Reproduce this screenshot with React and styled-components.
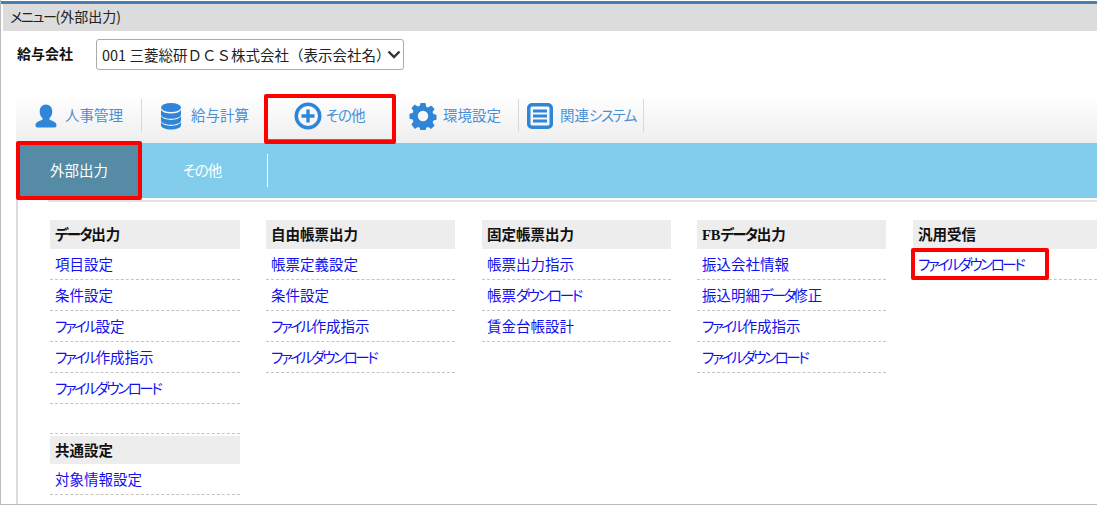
import React from "react";
import styled, { createGlobalStyle } from "styled-components";

const GlobalStyle = createGlobalStyle`
  html, body {
    margin: 0;
    padding: 0;
    background: #fff;
  }
  body {
    font-family: "Noto Sans CJK JP", "Liberation Sans", sans-serif;
    font-size: 14px;
  }
`;

const Page = styled.div`
  position: relative;
  width: 1097px;
  height: 505px;
  box-sizing: border-box;
  overflow: hidden;
  border-left: 1px solid #bcbcbc;
  border-bottom: 1px solid #bcbcbc;
  padding-top: 1px;
`;

const TopRule = styled.div`
  height: 3px;
  background: #4a7eb0;
`;

const TitleBar = styled.div`
  height: 27px;
  margin-left: 2px;
  padding-left: 7px;
  background: #dcdcdc;
  color: #222;
  font-size: 14px;
  line-height: 25px;
  font-feature-settings: "palt";
`;

const CompanyRow = styled.div`
  display: flex;
  align-items: flex-start;
  height: 64px;
  padding: 8px 0 0 16px;
  box-sizing: border-box;
`;

const CompanyLabel = styled.label`
  width: 79px;
  font-size: 14px;
  font-weight: 700;
  line-height: 29px;
  color: #111;
`;

const chevron =
  "data:image/svg+xml,%3Csvg xmlns='http://www.w3.org/2000/svg' width='14' height='9' viewBox='0 0 14 9'%3E%3Cpath d='M1.500 1.500 7 7l5.500-5.500' fill='none' stroke='%23333' stroke-width='2.400'/%3E%3C/svg%3E";

const CompanySelect = styled.select`
  width: 308px;
  height: 31px;
  padding: 0 0 0 5px;
  border: 1px solid #aaa;
  border-radius: 3px;
  appearance: none;
  background: #fff url("${chevron}") no-repeat right 2px center;
  color: #222;
  font-family: inherit;
  font-size: 14.5px;
`;

const Body = styled.div`
  margin-left: 15px;
  height: 409px;
  border-left: 2px solid #dcdcdc;
`;

const Nav = styled.nav`
  display: flex;
  align-items: flex-start;
  height: 48px;
  padding: 4px 0 0 2px;
  box-sizing: border-box;
  margin-left: -2px;
  background: linear-gradient(#fff, #eee);
`;

const NavItem = styled.a`
  display: flex;
  align-items: center;
  gap: ${(p) => p.$gap}px;
  height: ${(p) => (p.$current ? 41 : 33)}px;
  box-sizing: border-box;
  width: ${(p) => p.$width}px;
  padding-left: ${(p) => p.$pad}px;
  padding-bottom: ${(p) => (p.$current ? 7 : 0)}px;
  border-right: ${(p) => (p.$rule ? "1px solid #d8d8d8" : "none")};
  border-bottom: ${(p) => (p.$current ? "1px solid #2f86d8" : "none")};
  color: #4a90d9;
  font-size: 14.5px;
  font-feature-settings: "palt";
  white-space: nowrap;
`;

const NavLabel = styled.span`
  padding-bottom: 3px;
`;

const NavIcon = styled.svg`
  width: 28px;
  height: 28px;
  flex: none;
  fill: #2f86d8;
`;

const SubNav = styled.div`
  display: flex;
  align-items: center;
  height: 55px;
  margin-left: -2px;
  background: #82cdec;
`;

const SubTab = styled.a`
  display: flex;
  align-items: center;
  justify-content: center;
  align-self: ${(p) => (p.$active ? "stretch" : "center")};
  width: ${(p) => p.$width}px;
  margin-left: ${(p) => p.$offset || 0}px;
  height: ${(p) => (p.$active ? "auto" : "33px")};
  box-sizing: border-box;
  padding-bottom: 3px;
  background: ${(p) => (p.$active ? "#558ba5" : "transparent")};
  border-right: ${(p) => (p.$rule ? "1px solid #fff" : "none")};
  color: #fff;
  font-size: 14.5px;
  font-feature-settings: "palt";
`;

const Columns = styled.div`
  display: flex;
  margin: 2px 0 0 30px;
  padding: 18px 0 0 2px;
  border-top: 2px solid #e2e2e2;
`;

const Column = styled.div`
  width: ${(p) => p.$width}px;
  margin-right: ${(p) => p.$gap}px;
  flex: none;
`;

const GroupBreak = styled.div`
  height: 2px;
  margin-top: 29px;
  border-top: 1px dashed #c4c4c4;
`;

const Heading = styled.h3`
  margin: 0;
  height: ${(p) => (p.$compact ? 28 : 29)}px;
  padding-left: 5px;
  background: #ededed;
  color: #111;
  font-size: 14.5px;
  font-weight: 700;
  line-height: 28px;
  font-feature-settings: "palt";
`;

const SerifLatin = styled.span`
  font-family: "Liberation Serif", serif;
`;

const LinkRow = styled.a`
  display: block;
  height: 30px;
  padding-left: 5px;
  border-bottom: 1px dashed #c4c4c4;
  color: #1010f0;
  font-size: 14.5px;
  line-height: 29px;
  font-feature-settings: "palt";
  white-space: nowrap;
`;

const Kana = styled.span`
  letter-spacing: ${(p) => p.$track}px;
`;

const Callout = styled.div`
  position: absolute;
  left: ${(p) => p.$x}px;
  top: ${(p) => p.$y}px;
  width: ${(p) => p.$w}px;
  height: ${(p) => p.$h}px;
  box-sizing: border-box;
  border: 4px solid #f00;
  border-radius: 2px;
`;

// the reference font sets kana tighter than kanji
const Tight = ({ text, track }) =>
  text.split(/([ぁ-ヿ]+)/).map((part, i) =>
    i % 2 ? (
      <Kana key={i} $track={track}>
        {part}
      </Kana>
    ) : (
      part
    )
  );

const UserIcon = () => (
  <NavIcon viewBox="0 0 28 28">
    <path d="M14 2.500c-3.900 0-6.300 3-6.300 7 0 2.700 1 5 2.700 6.400.4 1 .2 1.700-.7 2.200C6.500 19.500 3.500 20.500 3.500 23.200c0 1.500 1 2.300 2.500 2.300h16c1.500 0 2.500-.8 2.500-2.300 0-2.700-3-3.700-6.200-5.100-.9-.5-1.100-1.200-.7-2.200 1.700-1.400 2.700-3.700 2.700-6.400 0-4-2.400-7-6.300-7z" />
  </NavIcon>
);

const DatabaseIcon = () => (
  <NavIcon viewBox="0 0 28 28">
    <ellipse cx="14" cy="5.500" rx="10" ry="4.500" />
    <path d="M4 8v4.500c0 2.400 4.500 4.300 10 4.300s10-1.900 10-4.300V8c-1.600 2.300-5.500 3.600-10 3.600S5.600 10.300 4 8z" />
    <path d="M4 14.300v4.200c0 2.400 4.500 4.300 10 4.300s10-1.900 10-4.300v-4.200c-1.600 2.300-5.500 3.600-10 3.600S5.600 16.600 4 14.300z" />
    <path d="M4 20.300v2.900c0 2.400 4.500 4.300 10 4.300s10-1.900 10-4.300v-2.900c-1.600 2.300-5.500 3.600-10 3.600S5.600 22.600 4 20.300z" />
  </NavIcon>
);

const PlusIcon = () => (
  <NavIcon viewBox="0 0 28 28">
    <path
      fillRule="evenodd"
      d="M14 .5a13.500 13.500 0 1 0 0 27 13.500 13.500 0 0 0 0-27zm0 3.500a10 10 0 1 1 0 20 10 10 0 0 1 0-20z"
    />
    <path d="M12.300 7.500h3.400v4.800h4.800v3.400h-4.800v4.800h-3.400v-4.800H7.500v-3.400h4.800z" />
  </NavIcon>
);

const GearIcon = () => (
  <NavIcon viewBox="0 0 28 28">
    <path
      fillRule="evenodd"
      d="M11.500 1h5l.7 3.700 2 .8 3-2.100 3.400 3.500-2 3 .8 2.100 3.100.7v5l-3.100.7-.8 2.100 2 3-3.400 3.500-3-2.100-2 .8-.7 3.700h-5l-.7-3.700-2-.8-3 2.100L2.400 22.500l2-3-.8-2.100-3.100-.7v-5l3.100-.7.8-2.100-2-3L5.800 2.400l3 2.100 2-.8zM14 8.800a5.200 5.200 0 1 0 0 10.400 5.200 5.200 0 0 0 0-10.400z"
    />
  </NavIcon>
);

const ListIcon = () => (
  <NavIcon viewBox="0 0 28 28">
    <path
      fillRule="evenodd"
      d="M6 1h16a5 5 0 0 1 5 5v16a5 5 0 0 1-5 5H6a5 5 0 0 1-5-5V6a5 5 0 0 1 5-5zm0 3.500A1.500 1.500 0 0 0 4.500 6v16A1.500 1.500 0 0 0 6 23.500h16a1.500 1.500 0 0 0 1.500-1.500V6A1.500 1.500 0 0 0 22 4.500z"
    />
    <path d="M7 7.500h14v3H7zM7 12.500h14v3H7zM7 17.500h14v3H7z" />
  </NavIcon>
);

const navItems = [
  { label: "人事管理", Icon: UserIcon, width: 124, pad: 14, gap: 5, track: -1, rule: true },
  { label: "給与計算", Icon: DatabaseIcon, width: 125, pad: 15, gap: 6, track: -1 },
  { label: "その他", Icon: PlusIcon, width: 126, pad: 27, gap: 4, track: -1, current: true },
  { label: "環境設定", Icon: GearIcon, width: 126, pad: 16, gap: 6, track: -1, rule: true },
  { label: "関連システム", Icon: ListIcon, width: 125, pad: 7, gap: 6, track: -1.5, rule: true },
];

const columns = [
  {
    id: "data",
    width: 190,
    gap: 26,
    groups: [
      { title: "データ出力", links: ["項目設定", "条件設定", "ファイル設定", "ファイル作成指示", "ファイルダウンロード"] },
      { title: "共通設定", links: ["対象情報設定"], spaced: true },
    ],
  },
  {
    id: "free",
    width: 189,
    gap: 27,
    groups: [{ title: "自由帳票出力", links: ["帳票定義設定", "条件設定", "ファイル作成指示", "ファイルダウンロード"] }],
  },
  {
    id: "fixed",
    width: 189,
    gap: 26,
    groups: [{ title: "固定帳票出力", links: ["帳票出力指示", "帳票ダウンロード", "賃金台帳設計"] }],
  },
  {
    id: "fb",
    width: 189,
    gap: 27,
    groups: [{ title: "データ出力", latin: "FB", links: ["振込会社情報", "振込明細データ修正", "ファイル作成指示", "ファイルダウンロード"] }],
  },
  {
    id: "receive",
    width: 184,
    gap: 0,
    groups: [{ title: "汎用受信", links: ["ファイルダウンロード"] }],
  },
];

export default function App() {
  return (
    <>
      <GlobalStyle />
      <Page>
        <TopRule />
        <TitleBar>
          <Tight text="メニュー" track={-1.3} />
          (外部出力)
        </TitleBar>
        <CompanyRow>
          <CompanyLabel>給与会社</CompanyLabel>
          <CompanySelect defaultValue="001">
            <option value="001">001 三菱総研ＤＣＳ株式会社（表示会社名）</option>
          </CompanySelect>
        </CompanyRow>
        <Body>
          <Nav>
            {navItems.map(({ label, Icon, width, pad, gap, track, rule, current }) => (
              <NavItem key={label} $width={width} $pad={pad} $gap={gap} $rule={rule} $current={current}>
                <Icon />
                <NavLabel>
                  <Tight text={label} track={track} />
                </NavLabel>
              </NavItem>
            ))}
          </Nav>
          <SubNav>
            <SubTab $active $width={118} $offset={4}>外部出力</SubTab>
            <SubTab $width={130} $rule>
              <Tight text="その他" track={-1} />
            </SubTab>
          </SubNav>
          <Columns>
            {columns.map((col) => (
              <Column key={col.id} $width={col.width} $gap={col.gap}>
                {col.groups.map((group) => (
                  <React.Fragment key={group.title}>
                    {group.spaced && <GroupBreak />}
                    <Heading $compact={group.spaced}>
                      {group.latin && <SerifLatin>{group.latin}</SerifLatin>}
                      <Tight text={group.title} track={-1.6} />
                    </Heading>
                    {group.links.map((link) => (
                      <LinkRow key={link}>
                        <Tight text={link} track={-2.4} />
                      </LinkRow>
                    ))}
                  </React.Fragment>
                ))}
              </Column>
            ))}
          </Columns>
        </Body>
        <Callout $x={263} $y={94} $w={132} $h={50} />
        <Callout $x={15} $y={141} $w={126} $h={59} />
        <Callout $x={910} $y={248} $w={138} $h={32} />
      </Page>
    </>
  );
}
